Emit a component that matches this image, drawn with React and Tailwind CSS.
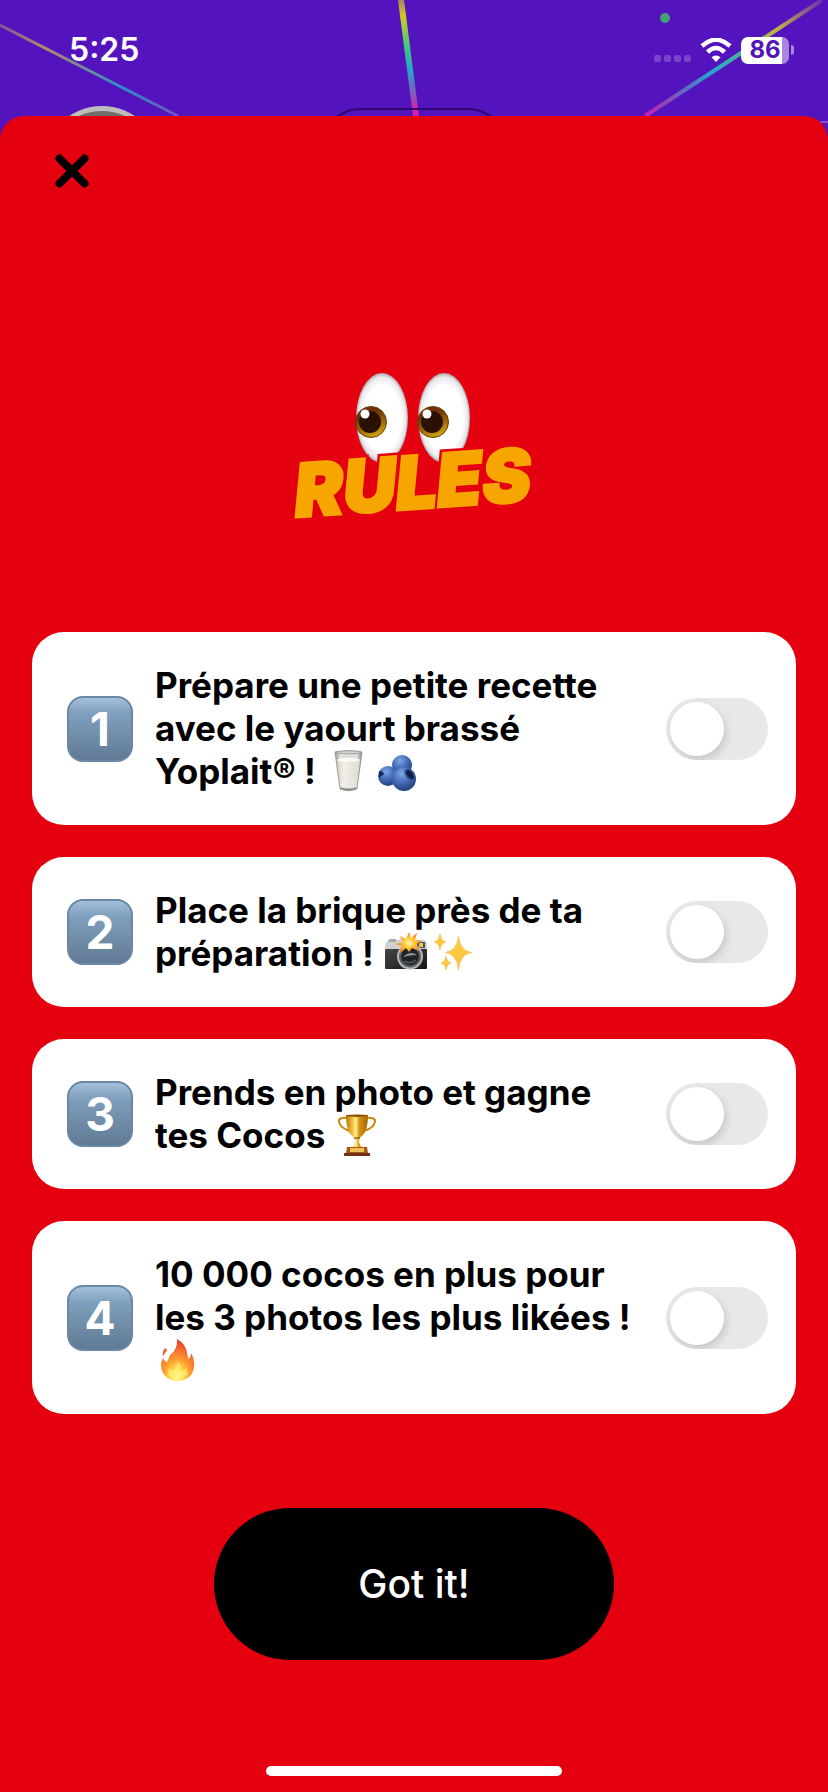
import { useState } from 'react';

const MilkIcon = () => (
  <svg viewBox="0 0 48 42" className="inline-block w-12 h-[42px] align-[-8px]" role="img" aria-label="milk">
    <defs>
      <linearGradient id="glass" x1="0" x2="1">
        <stop offset="0" stopColor="#9b9b99" />
        <stop offset="0.2" stopColor="#e2e2df" />
        <stop offset="0.8" stopColor="#dcdcd9" />
        <stop offset="1" stopColor="#8d8d8b" />
      </linearGradient>
      <linearGradient id="milk" x1="0" x2="1">
        <stop offset="0" stopColor="#d5d3c9" />
        <stop offset="0.3" stopColor="#f1efe7" />
        <stop offset="1" stopColor="#dedbd0" />
      </linearGradient>
    </defs>
    <path d="M11 2 L16 39 Q24.500 42.500 33 39 L38 2 Q24.500 -0.500 11 2Z" fill="url(#glass)" stroke="#8f8f8c" strokeWidth="0.8" />
    <path d="M13 10 L16.500 36 Q24.500 39 32.500 36 L36 10Z" fill="url(#milk)" />
    <ellipse cx="24.500" cy="9.800" rx="11.500" ry="2" fill="#fbfaf6" />
    <ellipse cx="24.500" cy="2.300" rx="13" ry="1.500" fill="#d4d4d1" stroke="#888885" strokeWidth="0.700" />
    <path d="M16.500 38 Q24.500 41 32.500 38" fill="none" stroke="#777774" strokeWidth="1.300" />
  </svg>
);

const BlueberriesIcon = () => (
  <svg viewBox="0 0 48 42" className="inline-block w-12 h-[42px] align-[-8px]" role="img" aria-label="blueberries">
    <defs>
      <radialGradient id="berry" cx="0.4" cy="0.28" r="0.75">
        <stop offset="0" stopColor="#7da5e6" />
        <stop offset="0.45" stopColor="#4a72bd" />
        <stop offset="1" stopColor="#213c7e" />
      </radialGradient>
    </defs>
    <circle cx="30" cy="15" r="10" fill="url(#berry)" />
    <circle cx="16" cy="26" r="10" fill="url(#berry)" />
    <path d="M7 21 Q11 21 12 24 Q9 26 7 28Z" fill="#172752" />
    <circle cx="32" cy="29" r="12" fill="url(#berry)" />
    <ellipse cx="37.500" cy="24.500" rx="4" ry="6.500" transform="rotate(-35 37.500 24.500)" fill="#2c4a8d" />
    <ellipse cx="38" cy="24.500" rx="2.500" ry="5" transform="rotate(-35 38 24.500)" fill="#121f45" />
  </svg>
);

const CameraIcon = () => (
  <svg viewBox="0 0 48 42" className="inline-block w-12 h-[42px] align-[-8px]" role="img" aria-label="camera with flash">
    <defs>
      <linearGradient id="body" x1="0" y1="0" x2="1" y2="1">
        <stop offset="0" stopColor="#454545" />
        <stop offset="1" stopColor="#161616" />
      </linearGradient>
      <radialGradient id="flash">
        <stop offset="0" stopColor="#fff9a6" />
        <stop offset="0.5" stopColor="#ffc02e" />
        <stop offset="1" stopColor="#f17a16" />
      </radialGradient>
    </defs>
    <path d="M5 10 L7 8 H17 L19 6 H30 L32 8 H42 L45 10 V20 H3 V12Z" fill="#d1d1cf" />
    <path d="M6 10 H14 V7 H7Z" fill="#ababa9" />
    <rect x="3" y="17" width="42" height="20" rx="1" fill="url(#body)" />
    <rect x="35" y="10" width="8" height="6" fill="#55554f" />
    <rect x="37" y="11" width="4" height="4" fill="#dfc55c" />
    <circle cx="28" cy="24.500" r="13" fill="#b5b7b8" />
    <circle cx="28" cy="24.500" r="11" fill="#5c6063" />
    <circle cx="28" cy="24.500" r="9" fill="#202426" />
    <path d="M21 25 Q28 18 35 23 Q28 23 21 25Z" fill="#8e9698" />
    <path d="M22 29 Q28 33 34 28" fill="none" stroke="#4d5659" strokeWidth="2" />
    <path d="M27 0 L29 6 L35 1 L33 8 L40 9 L34 12 L37 19 L30 16 L27 20 L24 16 L17 22 L20 14 L14 12 L21 10 L18 4 L24 7Z" fill="url(#flash)" />
  </svg>
);

const SparklesIcon = () => (
  <svg viewBox="0 0 48 42" className="inline-block w-12 h-[42px] align-[-8px]" role="img" aria-label="sparkles">
    <g fill="#fbc93d" stroke="#f1b64b" strokeWidth="0.6">
      <path d="M28.500 4 Q30 19 42 20.500 Q30 22 28.500 38 Q27 22 15 20.500 Q27 19 28.500 4Z" />
      <path d="M10 2 Q11 9 16 10 Q11 11 10 18 Q9 11 4 10 Q9 9 10 2Z" />
      <path d="M16 24 Q17 30 21 31 Q17 32 16 38 Q15 32 11 31 Q15 30 16 24Z" />
    </g>
  </svg>
);

const TrophyIcon = () => (
  <svg viewBox="0 0 48 42" className="inline-block w-12 h-[42px] align-[-8px]" role="img" aria-label="trophy">
    <defs>
      <linearGradient id="gold" x1="0" x2="1">
        <stop offset="0" stopColor="#b87408" />
        <stop offset="0.3" stopColor="#f3c43e" />
        <stop offset="0.45" stopColor="#fff0a0" />
        <stop offset="0.6" stopColor="#d89412" />
        <stop offset="1" stopColor="#a66205" />
      </linearGradient>
    </defs>
    <path d="M14 4 Q4 3 5 8 Q7 15 17 17 M32 4 Q42 3 41 8 Q39 15 29 17" fill="none" stroke="#c68712" strokeWidth="2" />
    <path d="M12 1 H34 Q34 17 28 22 Q25 23 25 28 L27 33 H19 L21 28 Q21 23 18 22 Q12 17 12 1Z" fill="url(#gold)" />
    <ellipse cx="23" cy="1.700" rx="11" ry="1.200" fill="#8d5605" />
    <path d="M20 24 H26" stroke="#9e6609" strokeWidth="1.500" />
    <path d="M13 33 H33 L34 39 H12Z" fill="#a8581a" />
    <rect x="16" y="34" width="14" height="4" fill="#edc257" />
    <rect x="10" y="39" width="26" height="3" fill="#713013" />
  </svg>
);

const FireIcon = () => (
  <svg viewBox="0 0 48 42" className="inline-block w-12 h-[42px] align-[-8px]" role="img" aria-label="fire">
    <defs>
      <radialGradient id="fire" cx="0.48" cy="0.88" r="0.8">
        <stop offset="0" stopColor="#fffbc0" />
        <stop offset="0.24" stopColor="#ffdc45" />
        <stop offset="0.5" stopColor="#ff9d32" />
        <stop offset="1" stopColor="#ed472b" />
      </radialGradient>
    </defs>
    <path d="M22 0 Q31 5 32 14 Q33 19 33 20 Q36 19 36 14 Q40 21 39 28 Q38 35 34 38 Q29 42 22 42 Q12 41 8 34 Q4 26 8 19 Q9 22 12 23 Q14 19 15 16 Q23 10 22 0Z" fill="url(#fire)" />
    <path d="M10 9 L12 11 L8 17 Q7 13 10 9Z" fill="#ef5533" />
    <path d="M23 23 Q27 26 26 32 Q30 32 31 28 Q34 34 30 38 Q23 43 16 39 Q11 35 14 29 Q17 32 18 32 Q22 28 23 23Z" fill="#fff07a" opacity="0.65" />
  </svg>
);

const RULES = [
  { id: 1, text: 'Prépare une petite recette avec le yaourt brassé Yoplait®\u00a0!', icons: [MilkIcon, BlueberriesIcon] },
  { id: 2, text: 'Place la brique près de ta préparation\u00a0!', icons: [CameraIcon, SparklesIcon] },
  { id: 3, text: 'Prends en photo et gagne tes Cocos', icons: [TrophyIcon] },
  { id: 4, text: '10 000 cocos en plus pour les 3 photos les plus likées\u00a0!', icons: [FireIcon] }
];

function Backdrop() {
  return (
    <svg viewBox="0 0 828 150" preserveAspectRatio="xMidYMin slice" className="absolute inset-x-0 top-0 w-full h-[150px]" aria-hidden="true">
      <defs>
        <linearGradient id="beamLeft" gradientUnits="userSpaceOnUse" x1="0" y1="25" x2="178" y2="116">
          <stop offset="0" stopColor="#80519a" />
          <stop offset="0.24" stopColor="#b08a6b" />
          <stop offset="0.45" stopColor="#7a8995" />
          <stop offset="0.68" stopColor="#2d8fce" />
          <stop offset="1" stopColor="#7152bc" />
        </linearGradient>
        <linearGradient id="beamMid" gradientUnits="userSpaceOnUse" x1="401" y1="0" x2="416" y2="116">
          <stop offset="0" stopColor="#a68560" />
          <stop offset="0.14" stopColor="#d1cc20" />
          <stop offset="0.4" stopColor="#43c980" />
          <stop offset="0.6" stopColor="#25a5c8" />
          <stop offset="0.8" stopColor="#7c5ebe" />
          <stop offset="0.95" stopColor="#d620a0" />
        </linearGradient>
        <linearGradient id="beamRight" gradientUnits="userSpaceOnUse" x1="822" y1="0" x2="645" y2="116">
          <stop offset="0" stopColor="#6e30ac" />
          <stop offset="0.26" stopColor="#c4b43f" />
          <stop offset="0.43" stopColor="#55b58a" />
          <stop offset="0.62" stopColor="#23a6cf" />
          <stop offset="0.84" stopColor="#7c55bb" />
          <stop offset="1" stopColor="#c71ead" />
        </linearGradient>
      </defs>
      <path d="M0 25 L178 116" stroke="url(#beamLeft)" strokeWidth="3" />
      <path d="M398 0 H404 L419 116 H413Z" fill="url(#beamMid)" />
      <path d="M822 0 L645 116" stroke="url(#beamRight)" strokeWidth="4" />
      <path d="M334 119 Q346 109 360 109 H468 Q482 109 494 119" fill="none" stroke="#2c0870" strokeWidth="2" />
      <circle cx="102" cy="165" r="59" fill="#bdbdbb" />
      <circle cx="102" cy="165" r="54" fill="#6f706c" />
      <path d="M820 122 H828" stroke="#8b4cca" strokeWidth="2" />
      <circle cx="665" cy="18" r="5" fill="#459f77" />
    </svg>
  );
}

function StatusBar() {
  return (
    <div className="relative flex items-center justify-between h-[100px] pl-[69px] pr-[34px]">
      <span className="text-[32px] font-semibold leading-10 text-white">5:25</span>
      <div className="flex items-center gap-[9px]">
        <div className="flex gap-[3px] pt-4">
          <span className="w-[7px] h-[7px] rounded-xs bg-[#7943cc]" />
          <span className="w-[7px] h-[7px] rounded-xs bg-[#7943cc]" />
          <span className="w-[7px] h-[7px] rounded-xs bg-[#7943cc]" />
          <span className="w-[7px] h-[7px] rounded-xs bg-[#7943cc]" />
        </div>
        <svg viewBox="0 0 32 24" className="w-8 h-6" aria-hidden="true">
          <path d="M2 8 Q16 -4.500 30 8" fill="none" stroke="white" strokeWidth="4.500" />
          <path d="M7.500 14 Q16 6 24.500 14" fill="none" stroke="white" strokeWidth="4.500" />
          <path d="M16 24 L11.500 19.300 Q16 15.500 20.500 19.300Z" fill="white" />
        </svg>
        <div className="flex items-center gap-[2px]">
          <div className="flex items-center justify-center w-12 h-[27px] rounded-[7px] bg-linear-to-r from-white from-85% to-[#ab86df] to-85%">
            <span className="text-2xl font-bold leading-none text-[#5315b5]">86</span>
          </div>
          <span className="w-[3px] h-[10px] rounded-r-full bg-[#ab86df]" />
        </div>
      </div>
    </div>
  );
}

function Logo() {
  return (
    <svg viewBox="0 0 280 190" className="w-[280px] h-[190px]" role="img" aria-labelledby="logo-text">
      <defs>
        <radialGradient id="eyeball" cx="0.5" cy="0.5" r="0.52">
          <stop offset="0.7" stopColor="#ffffff" />
          <stop offset="0.88" stopColor="#e9e7ea" />
          <stop offset="1" stopColor="#8c8789" />
        </radialGradient>
        <linearGradient id="iris" x1="0.3" y1="0" x2="0.7" y2="1">
          <stop offset="0.25" stopColor="#6f3108" />
          <stop offset="0.7" stopColor="#a87608" />
          <stop offset="1" stopColor="#dbb20c" />
        </linearGradient>
      </defs>
      <ellipse cx="108" cy="53" rx="26" ry="45" fill="url(#eyeball)" />
      <circle cx="97" cy="57" r="15.500" fill="url(#iris)" stroke="#65400b" strokeWidth="1" />
      <circle cx="96" cy="57" r="11" fill="#2b1004" />
      <circle cx="91" cy="49" r="4.500" fill="white" />
      <ellipse cx="170" cy="53" rx="26" ry="45" fill="url(#eyeball)" />
      <circle cx="159" cy="57" r="15.500" fill="url(#iris)" stroke="#65400b" strokeWidth="1" />
      <circle cx="158" cy="57" r="11" fill="#2b1004" />
      <circle cx="153" cy="49" r="4.500" fill="white" />
      <g transform="rotate(-4 22 152)" className="text-[73px] font-black italic">
        <text x="22" y="152" stroke="#e4000f" strokeWidth="8" aria-hidden="true">RULES</text>
        <text id="logo-text" x="22" y="152" fill="#f7a600" stroke="#f7a600" strokeWidth="3">RULES</text>
      </g>
    </svg>
  );
}

function RuleCard({ rule, checked, onToggle }) {
  return (
    <li className="flex items-center pl-[35px] pr-7 py-8 bg-white rounded-4xl">
      <span className="flex items-center justify-center shrink-0 w-[66px] h-[66px] rounded-2xl border-2 border-[#6a87a5] bg-linear-to-b from-[#a3bfdb] via-[#7f9fbe] via-25% to-[#617a93] text-[46px] font-bold leading-none text-white">
        {rule.id}
      </span>
      <label htmlFor={`rule-${rule.id}`} className="flex-1 ml-[22px] mr-6 text-[35px] font-bold leading-[43px] text-black">
        {rule.text}{' '}
        {rule.icons.map((Icon, i) => <Icon key={i} />)}
      </label>
      <input
        id={`rule-${rule.id}`}
        type="checkbox"
        role="switch"
        checked={checked}
        onChange={onToggle}
        className="appearance-none shrink-0 w-[102px] h-[62px] p-1 rounded-full overflow-hidden bg-[#e8e8e8] checked:bg-green-500 cursor-pointer before:block before:w-[54px] before:h-[54px] before:rounded-full before:bg-white before:shadow-[2px_4px_8px_rgba(0,0,0,0.15)] checked:before:translate-x-10 before:transition"
      />
    </li>
  );
}

export default function App() {
  const [accepted, setAccepted] = useState({});

  const toggleRule = (id) => {
    setAccepted({ ...accepted, [id]: !accepted[id] });
  };

  return (
    <div className="relative flex flex-col min-h-screen bg-[#5414bd] font-['Inter',sans-serif]">
      <Backdrop />
      <StatusBar />

      {/* Rules sheet */}
      <main className="relative flex flex-col flex-1 mt-4 px-8 pb-4 rounded-t-3xl bg-[#e4000f]">
        <button type="button" aria-label="Close" className="self-start mt-[34px] ml-[19px] p-1 cursor-pointer">
          <svg viewBox="0 0 34 34" className="w-[34px] h-[34px]" aria-hidden="true">
            <path d="M4.500 4.500 L29.500 29.500 M29.500 4.500 L4.500 29.500" stroke="black" strokeWidth="8" strokeLinecap="round" />
          </svg>
        </button>

        <h1 className="flex justify-center mt-[173px]">
          <Logo />
        </h1>

        <ul className="flex flex-col gap-8 mt-[77px]">
          {RULES.map((rule) => (
            <RuleCard
              key={rule.id}
              rule={rule}
              checked={!!accepted[rule.id]}
              onToggle={() => toggleRule(rule.id)}
            />
          ))}
        </ul>

        <button type="button" className="self-center w-[400px] max-w-full h-[152px] mt-[94px] rounded-[76px] bg-black text-[39px] font-medium text-white cursor-pointer">
          Got it!
        </button>

        <div className="self-center w-[296px] h-[10px] mt-auto rounded-full bg-white" />
      </main>
    </div>
  );
}
